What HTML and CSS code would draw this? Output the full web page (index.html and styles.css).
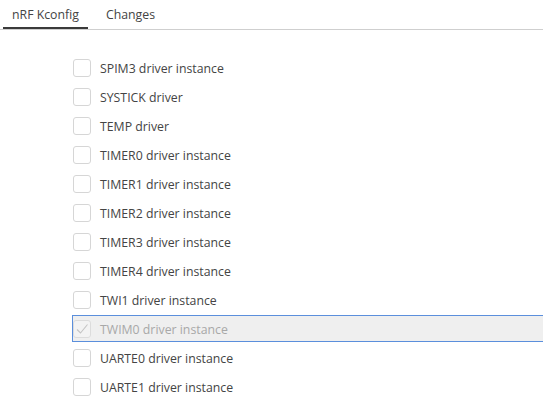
FILE: index.html
```html
<!DOCTYPE html>
<html>
<head>
<meta charset="utf-8">
<title>nRF Kconfig</title>
<link rel="stylesheet" href="styles.css">
</head>
<body>
	<div class="tabs">
		<a href="#" class="tab on">nRF Kconfig</a>
		<a href="#" class="tab">Changes</a>
	</div>
	<ul class="options">
		<li class="option"><span class="box"></span>SPIM3 driver instance</li>
		<li class="option"><span class="box"></span>SYSTICK driver</li>
		<li class="option"><span class="box"></span>TEMP driver</li>
		<li class="option"><span class="box"></span>TIMER0 driver instance</li>
		<li class="option"><span class="box"></span>TIMER1 driver instance</li>
		<li class="option"><span class="box"></span>TIMER2 driver instance</li>
		<li class="option"><span class="box"></span>TIMER3 driver instance</li>
		<li class="option"><span class="box"></span>TIMER4 driver instance</li>
		<li class="option"><span class="box"></span>TWI1 driver instance</li>
		<li class="option focus disabled"><span class="box"><svg width="16" height="16" viewBox="0 0 16 16"><path d="M3 8.5 L6.5 12 L13.5 3.5" fill="none" stroke="#c4c4c4" stroke-width="1.1"/></svg></span>TWIM0 driver instance</li>
		<li class="option"><span class="box"></span>UARTE0 driver instance</li>
		<li class="option"><span class="box"></span>UARTE1 driver instance</li>
	</ul>
</body>
</html>
```

FILE: styles.css
```css
*{
	margin: 0;
	padding: 0;
	text-decoration: none;
	box-sizing: border-box;
}
body{
	font-family: "Open Sans", "Noto Sans", sans-serif;
	font-size: 12.3px;
	color: #444;
	background: #fff;
	overflow: hidden;
}
.tabs{
	display: flex;
	gap: 9px;
	padding-left: 3px;
	border-bottom: 1px solid #cfcfcf;
	height: 30px;
}
.tab{
	display: block;
	padding: 0 9px;
	line-height: 29px;
	color: #444;
	border-bottom: 2px solid transparent;
}
.tab.on{
	border-bottom-color: #3a3a3a;
}
.options{
	list-style: none;
	padding: 24px 0 0 72px;
	display: flex;
	flex-direction: column;
	gap: 2px;
	width: 560px;
}
.option{
	display: flex;
	align-items: center;
	height: 27px;
	padding-top: 1px;
	border: 1px solid transparent;
}
.box{
	display: flex;
	align-items: center;
	justify-content: center;
	width: 18px;
	height: 18px;
	margin-top: -1px;
	border: 1px solid #d6d6d6;
	border-radius: 3px;
	margin-right: 9px;
	background: #fff;
}
.focus{
	background: #efefef;
	border-color: #5b8fdc;
}
.disabled{
	color: #a8a8a8;
}
.disabled .box{
	background: #f3f3f3;
	border-color: #dcdcdc;
}
```
